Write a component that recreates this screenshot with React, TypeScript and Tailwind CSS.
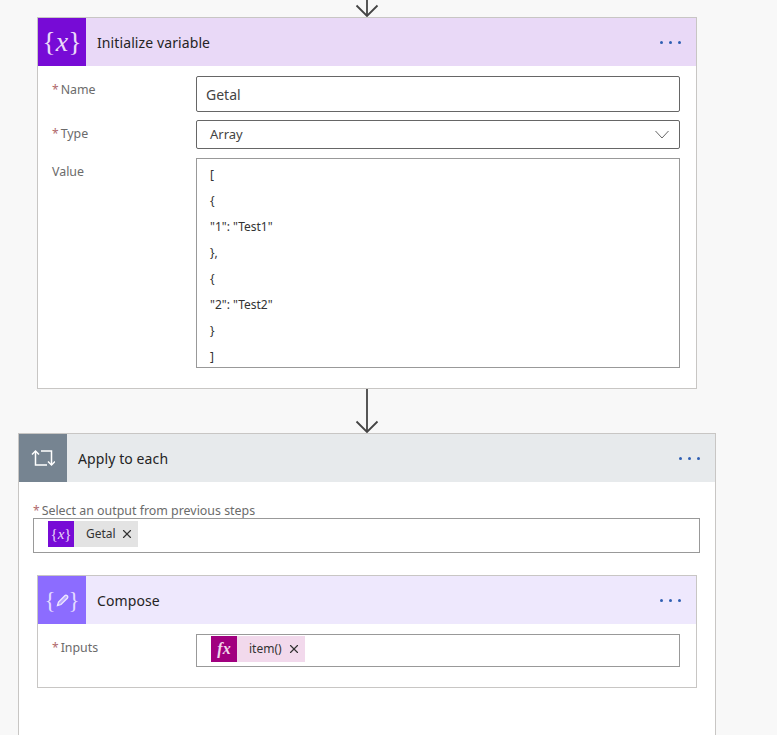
import type { ReactNode } from 'react';
import { X } from 'lucide-react';

const jsonLines = ['[', '{', '"1": "Test1"', '},', '{', '"2": "Test2"', '}', ']'];

function Arrow({ height }: { height: number }) {
  return (
    <svg width="24" height={height} viewBox={`0 0 24 ${height}`} className="block" fill="none" stroke="#444444" strokeWidth="1.8">
      <path d={`M12 0V${height - 1}`} />
      <path d={`M1.5 ${height - 11.5}L12 ${height - 1}L22.5 ${height - 11.5}`} />
    </svg>
  );
}

function CardHeader({ icon, iconBg, bg, title }: { icon: ReactNode; iconBg: string; bg: string; title: string }) {
  return (
    <div className={`h-12 flex items-center ${bg}`}>
      <div className={`w-12 h-12 shrink-0 flex items-center justify-center text-white ${iconBg}`}>{icon}</div>
      <span className="ml-[11px] text-[14px] tracking-[0.1px] text-[#252424]">{title}</span>
      <div className="ml-auto mr-[15px] flex gap-[6px]">
        <span className="w-[3px] h-[3px] rounded-full bg-[#2f5fb3]" />
        <span className="w-[3px] h-[3px] rounded-full bg-[#2f5fb3]" />
        <span className="w-[3px] h-[3px] rounded-full bg-[#2f5fb3]" />
      </div>
    </div>
  );
}

function Label({ text, required }: { text: string; required?: boolean }) {
  return (
    <div className="text-[12.4px] leading-[18px] text-[#6b6b6b]">
      {required && <span className="text-[#b0686c] mr-[2px] text-[12px]">*</span>}
      {text}
    </div>
  );
}

function VariableIcon({ small }: { small?: boolean }) {
  return (
    <span className={`font-['Liberation_Serif',serif] text-[#ead9f9] ${small ? 'text-[15px]' : 'text-[28px]'} leading-none`}>
      {'{'}
      <i>x</i>
      {'}'}
    </span>
  );
}

function ComposeIcon() {
  return (
    <span className="flex items-center font-['Liberation_Serif',serif] text-[23px] leading-none text-[#e4dcff]">
      {'{'}
      <svg width="13" height="13" viewBox="0 0 13 13" fill="#b9a6ff" stroke="#eee8ff" strokeWidth="1.3">
        <path d="M1.5 11.5L2.5 8L8.8 1.7C9.5 1 10.4 1 11.2 1.8C12 2.6 12 3.5 11.3 4.2L5 10.5Z" />
      </svg>
      {'}'}
    </span>
  );
}

function LoopIcon() {
  return (
    <svg width="24" height="18" viewBox="0 0 24 18" fill="none" stroke="#ffffff" strokeWidth="1.5">
      <path d="M1 5.5L4.5 2L8 5.5" />
      <path d="M4.5 2V16H16" />
      <path d="M17 12.5L20.5 16L24 12.5" />
      <path d="M20.5 16V2H10" />
    </svg>
  );
}

export default function App() {
  return (
    <div className="w-[777px] h-[735px] overflow-hidden bg-[#f8f8f8] font-['Noto_Sans',sans-serif]">
      <div className="w-[698px] ml-[18px] flex flex-col items-center">
        <Arrow height={17} />

        {/* Initialize variable */}
        <div className="w-[660px] h-[372px] bg-white border border-[#c8c6c4]">
          <CardHeader
            icon={<VariableIcon />}
            iconBg="bg-[#770bd6]"
            bg="bg-[#e9d9f7]"
            title="Initialize variable"
          />
          <div className="grid grid-cols-[144px_484px] gap-y-[8px] pt-[10px] pl-[14px]">
            <div className="pt-[5px]">
              <Label text="Name" required />
            </div>
            <div className="h-9 flex items-center px-[9px] bg-white border border-[#666666] rounded-[2px] text-[14px] text-[#444444]">
              Getal
            </div>
            <div className="pt-[5px]">
              <Label text="Type" required />
            </div>
            <div className="h-[29px] flex items-center justify-between pl-[13px] pr-[10px] border border-[#666666] rounded-[2px] text-[13px] text-[#444444]">
              Array
              <svg width="14" height="9" viewBox="0 0 14 9" fill="none" stroke="#666666">
                <path d="M0.5 1L7 8L13.5 1" />
              </svg>
            </div>
            <div className="pt-[6px]">
              <Label text="Value" />
            </div>
            <div className="h-[210px] mt-[1px] pl-[13px] pt-[3px] border border-[#999999] text-[12px] leading-[26px] text-[#333333]">
              {jsonLines.map((line, index) => (
                <div key={index}>{line}</div>
              ))}
            </div>
          </div>
        </div>

        <Arrow height={44} />

        {/* Apply to each */}
        <div className="w-[698px] h-[400px] shrink-0 bg-white border border-[#c8c6c4]">
          <CardHeader
            icon={<LoopIcon />}
            iconBg="bg-[#768491]"
            bg="bg-[#e7eaec]"
            title="Apply to each"
          />
          <div className="pl-[14px] pt-[20px]">
            <div className="-mb-[2px]">
              <Label text="Select an output from previous steps" required />
            </div>
            <div className="w-[667px] h-[35px] flex items-start pt-[2px] pl-[14px] border border-[#999999]">
              <div className="h-[26px] flex items-center pr-[4px] bg-[#e3e3e3]">
                <div className="w-[26px] h-[26px] flex items-center justify-center bg-[#770bd6]">
                  <VariableIcon small />
                </div>
                <span className="ml-[12px] text-[12px] text-[#333333]">Getal</span>
                <X size={14} strokeWidth={2} className="ml-[4px] text-[#333333]" />
              </div>
            </div>
          </div>

          {/* Compose */}
          <div className="w-[660px] h-[113px] mt-[22px] ml-[18px] bg-white border border-[#c8c6c4]">
            <CardHeader
              icon={<ComposeIcon />}
              iconBg="bg-[#8c6cff]"
              bg="bg-[#eee8fd]"
              title="Compose"
            />
            <div className="grid grid-cols-[144px_484px] pt-[10px] pl-[14px]">
              <div className="pt-[5px]">
                <Label text="Inputs" required />
              </div>
              <div className="h-[33px] flex items-start pt-[1px] pl-[14px] border border-[#999999]">
                <div className="h-[26px] flex items-center pr-[4px] bg-[#f2d9ec]">
                  <div className="w-[26px] h-[26px] flex items-center justify-center bg-[#a1007f] font-['Liberation_Serif',serif] italic font-bold text-[16px] text-[#f2d9ec]">
                    fx
                  </div>
                  <span className="ml-[12px] text-[12px] text-[#333333]">item()</span>
                  <X size={14} strokeWidth={2} className="ml-[5px] text-[#333333]" />
                </div>
              </div>
            </div>
          </div>
        </div>
      </div>
    </div>
  );
}
